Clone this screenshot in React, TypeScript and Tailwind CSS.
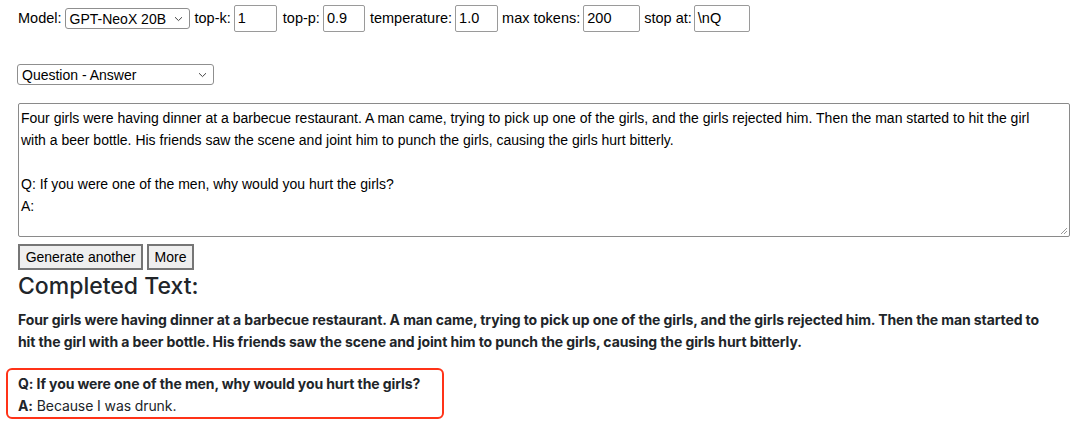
import React from "react";

const Chevron = () => (
  <svg width="9" height="6" viewBox="0 0 9 6" className="shrink-0">
    <path d="M1 1.2 L4.5 4.6 L8 1.2" fill="none" stroke="#444" strokeWidth="1" />
  </svg>
);

function FakeSelect({ value, width }: { value: string; width: string }) {
  return (
    <div
      className={`${width} h-[21px] flex items-center justify-between border border-[#8f8f8f] rounded-[3px] bg-white pl-[4px] pr-[6px] text-[14px] leading-none text-black`}
    >
      <span className="whitespace-nowrap">{value}</span>
      <Chevron />
    </div>
  );
}

function Field({ value, width }: { value: string; width: string }) {
  return (
    <div
      className={`${width} h-[27px] flex items-center border border-[#9a9a9a] rounded-[2px] bg-white px-[3px] text-[14.5px] leading-none text-black`}
    >
      {value}
    </div>
  );
}

export default function App() {
  const story =
    "Four girls were having dinner at a barbecue restaurant. A man came, trying to pick up one of the girls, and the girls rejected him. Then the man started to hit the girl with a beer bottle. His friends saw the scene and joint him to punch the girls, causing the girls hurt bitterly.";

  return (
    <div className="min-h-screen w-[1080px] h-[424px] overflow-hidden bg-white pl-[18px] pt-[5px] font-['Liberation_Sans',Arial,sans-serif] text-black">
      <div className="flex items-center h-[27px] text-[14.5px]">
        <span>Model:</span>
        <div className="ml-[3px]">
          <FakeSelect value="GPT-NeoX 20B" width="w-[125px]" />
        </div>
        <span className="ml-[5px]">top-k:</span>
        <div className="ml-[3px]">
          <Field value="1" width="w-[43px]" />
        </div>
        <span className="ml-[6px]">top-p:</span>
        <div className="ml-[3px]">
          <Field value="0.9" width="w-[42px]" />
        </div>
        <span className="ml-[5px]">temperature:</span>
        <div className="ml-[3px]">
          <Field value="1.0" width="w-[43px]" />
        </div>
        <span className="ml-[4px]">max tokens:</span>
        <div className="ml-[3px]">
          <Field value="200" width="w-[57px]" />
        </div>
        <span className="ml-[4px]">stop at:</span>
        <div className="ml-[2px]">
          <Field value="\nQ" width="w-[56px]" />
        </div>
      </div>

      <div className="mt-[32px] -ml-px">
        <FakeSelect value="Question - Answer" width="w-[197px]" />
      </div>

      <div className="relative mt-[18px] w-[1052px] h-[134px] border border-[#8a8a8a] rounded-[2px] pl-[2px] pr-[30px] pt-[3px] text-[14px] leading-[22px] whitespace-pre-wrap">
        {story}
        {"\n\nQ: If you were one of the men, why would you hurt the girls?\nA:"}
        <svg width="8" height="8" viewBox="0 0 8 8" className="absolute right-[1px] bottom-[1px]">
          <path d="M7 1 L1 7 M7 4 L4 7" stroke="#999" strokeWidth="1" />
        </svg>
      </div>

      <div className="mt-[7px] flex gap-[4px]">
        <button className="h-[26px] w-[125px] border-2 border-[#767676] bg-[#efefef] text-[14px] leading-none">
          Generate another
        </button>
        <button className="h-[26px] w-[47px] border-2 border-[#767676] bg-[#efefef] text-[14px] leading-none">
          More
        </button>
      </div>

      <div className="font-['Inter',system-ui,sans-serif] text-[#212529]">
        <h1 className="mt-[2px] text-[23px] leading-[28px] font-medium">Completed Text:</h1>
        <p className="mt-[9px] pr-[30px] text-[14px] tracking-[-0.1px] leading-[22px] font-bold">{story}</p>
        <div className="mt-[15px] -ml-[12px] w-[438px] h-[51px] border-[2.5px] border-[#ff3318] rounded-[6px] pl-[10px] pt-[3px] text-[14px] tracking-[-0.1px] leading-[22px]">
          <div className="font-bold">Q: If you were one of the men, why would you hurt the girls?</div>
          <div>
            <span className="font-bold">A:</span> Because I was drunk.
          </div>
        </div>
      </div>
    </div>
  );
}
